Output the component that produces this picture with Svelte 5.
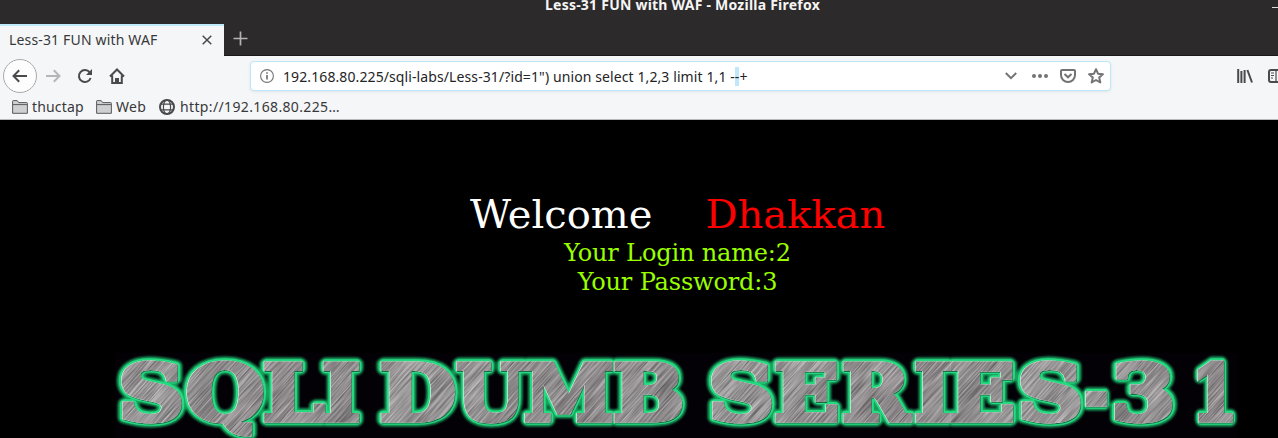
<script>
  // Each banner glyph is stretched to span [left, right] on the baseline.
  const glyphs = [
    ['S', 122, 182], ['Q', 187, 263], ['L', 264, 325], ['I', 323, 360],
    ['D', 381, 455], ['U', 456, 526], ['M', 525, 613], ['B', 614, 683],
    ['S', 712, 772], ['E', 775, 838], ['R', 843, 913], ['I', 915, 951], ['E', 950, 1014],
    ['S', 1021, 1081], ['-', 1085, 1108], ['3', 1115, 1173], ['1', 1197, 1234]
  ];
  const size = 76;
  const inset = 2.5;
  const ctx = document.createElement('canvas').getContext('2d');
  ctx.font = `bold ${size}px "DejaVu Serif"`;
  const fitted = glyphs.map(([char, left, right]) => {
    const m = ctx.measureText(char);
    const sx = (right - left - inset * 2) / (m.actualBoundingBoxLeft + m.actualBoundingBoxRight);
    return { char, t: `translate(${left + inset + m.actualBoundingBoxLeft * sx} 68) scale(${sx} 1)` };
  });
</script>

<div class="window">
  <header class="title">Less-31 FUN with WAF - Mozilla Firefox<i></i></header>
  <div class="tabs">
    <div class="tab"><span>Less-31 FUN with WAF</span>
      <svg width="12" height="12" viewBox="0 0 12 12"><path d="M1.7 1.7l8.6 8.6M10.3 1.7l-8.6 8.6" stroke="#4a4a4c" stroke-width="1.5" /></svg>
    </div>
    <svg class="plus" width="15" height="15" viewBox="0 0 15 15"><path d="M7.5 .5v14M.5 7.5h14" stroke="#b4b2b3" stroke-width="1.7" /></svg>
  </div>
  <nav>
    <div class="back"><svg width="16" height="16" viewBox="0 0 16 16"><path d="M15 8H2M7.2 2.2L1.5 8l5.7 5.8" /></svg></div>
    <svg class="forward" width="16" height="16" viewBox="0 0 16 16"><path d="M1 8h13M8.8 2.2L14.5 8l-5.7 5.8" /></svg>
    <svg class="reload" width="16" height="16" viewBox="0 0 16 16"><path d="M12.7 4.4A6 6 0 1 0 13.6 10" /><path d="M15 1v6H9z" fill="#4a4a4c" stroke="none" /></svg>
    <svg class="home" width="16" height="16" viewBox="0 0 16 16"><path d="M1 8.5L8 1.5l7 7M3.2 7.5V15h9.6V7.5" /><path d="M6 15v-5h4v5" fill="#4a4a4c" stroke="none" /></svg>
    <div class="url">
      <svg width="14" height="14" viewBox="0 0 14 14" fill="none" stroke="#737375"><circle cx="7" cy="7" r="6.4" stroke-width="1.1" /><path d="M7 6v4.5M7 3.2v1.6" stroke-width="1.7" /></svg>
      <span class="address">192.168.80.225/sqli-labs/Less-31/?id=1") union select 1,2,3 limit 1,1 -<mark>-</mark>+</span>
      <div class="actions">
        <svg width="12" height="8" viewBox="0 0 12 8"><path d="M.8 1L6 6.2 11.2 1" /></svg>
        <svg class="dots" width="16" height="4" viewBox="0 0 16 4"><circle cx="2" cy="2" r="2" /><circle cx="8" cy="2" r="2" /><circle cx="14" cy="2" r="2" /></svg>
        <svg class="pocket" width="16" height="14" viewBox="0 0 16 14"><path d="M2 1h12q1 0 1 1v4a7 7 0 0 1-14 0V2q0-1 1-1z" /><path d="M4.5 5L8 8.3 11.5 5" /></svg>
        <svg class="star" width="16" height="16" viewBox="0 0 16 16"><path d="M8 1.2l2 4.5 4.9.5-3.7 3.3 1.1 5L8 12l-4.3 2.5 1.1-5-3.7-3.3L6 5.7z" stroke-linejoin="round" /></svg>
      </div>
    </div>
    <svg class="library" width="16" height="14" viewBox="0 0 16 14"><path d="M1.2 0v14M4.4 2v12M7.6 1v13M10.4 1L15 13.5" stroke-width="2" /></svg>
    <svg class="side" width="16" height="14" viewBox="0 0 16 14"><rect x="1" y="1" width="14" height="12" rx="2" /><path d="M8 1v12M3 4h3M3 6.5h3M3 9h2" stroke-width="1.2" /></svg>
  </nav>
  <div class="bookmarks">
    {#each ['thuctap', 'Web'] as name}
      <svg class="folder" width="16" height="14" viewBox="0 0 16 14"><path d="M.6 13.3V1.2q0-.6.6-.6h4l1.5 2h8q.7 0 .7.7v10z" fill="#ced0d2" stroke="#5a5a5c" /><path d="M1 4.6h14" stroke="#5a5a5c" /></svg>
      <span class={name}>{name}</span>
    {/each}
    <svg class="globe" width="16" height="16" viewBox="0 0 16 16"><circle cx="8" cy="8" r="7" stroke-width="2" /><ellipse cx="8" cy="8" rx="3.6" ry="7" /><path d="M1.5 5.2h13M1.5 10.8h13" /></svg>
    <span class="link">http://192.168.80.225…</span>
  </div>
  <main>
    <h1><span>Welcome</span><b>Dhakkan</b></h1>
    <p class="login">Your Login name:2</p>
    <p class="pass">Your Password:3</p>
    <svg class="banner" width="1278" height="86" viewBox="0 0 1278 86">
      <defs>
        <linearGradient id="steel" gradientUnits="userSpaceOnUse" x1="0" y1="0" x2="110" y2="70" spreadMethod="reflect">
          <stop offset="0" stop-color="#857f81" /><stop offset=".25" stop-color="#989495" /><stop offset=".5" stop-color="#858182" /><stop offset=".8" stop-color="#a5a2a3" /><stop offset="1" stop-color="#8f8b8c" />
        </linearGradient>
        <filter id="grain" x="0" y="0" width="1" height="1" color-interpolation-filters="sRGB">
          <feTurbulence type="fractalNoise" baseFrequency=".85 .025" numOctaves="2" seed="4" />
          <feColorMatrix values="1.7 0 0 0 -.27  1.7 0 0 0 -.28  1.7 0 0 0 -.27  0 0 0 0 .34" />
        </filter>
        <filter id="soft" filterUnits="userSpaceOnUse" x="0" y="-10" width="1278" height="106"><feGaussianBlur stdDeviation="1.1" /></filter>
        <g id="letters">{#each fitted as g}<text transform={g.t}>{g.char}</text>{/each}</g>
        <mask id="cut" maskUnits="userSpaceOnUse" x="0" y="0" width="1278" height="86"><use href="#letters" class="mask" /></mask>
      </defs>
      <rect x="115" y="1" width="1123" height="85" fill="#040106" />
      {#each ['glow', 'edge', 'shade', 'shine'] as layer}
        <use href="#letters" class={layer} />
      {/each}
      <g mask="url(#cut)">
        <rect width="1278" height="86" fill="url(#steel)" />
        <g transform="rotate(42)"><rect x="0" y="-900" width="1100" height="1000" filter="url(#grain)" /></g>
      </g>
    </svg>
  </main>
</div>

<style>
  :global(body) { margin: 0; background: #000; }
  .window { width: 1278px; height: 438px; overflow: hidden; background: #000; font: 15px "Noto Sans", sans-serif; color: #38383a; }
  svg { display: block; flex: none; }
  .title { height: 24px; background: #2d2a2b; color: #f5f5f5; font-weight: 700; font-size: 14px; line-height: 10px; padding-left: 545px; box-sizing: border-box; white-space: nowrap; display: flex; letter-spacing: .23px; }
  .title i { width: 6px; height: 1px; background: #ddd; margin: 7px 0 0 auto; }
  .tabs { height: 32px; background: #2d2a2b; display: flex; box-sizing: border-box; border-bottom: 1px solid #1b181c; }
  .tab { width: 224px; height: 32px; box-sizing: border-box; border-top: 2px solid #bfe9f8; background: #f5f6f7; display: flex; align-items: center; padding: 0 11px 2px 9px; justify-content: space-between; font-size: 14px; white-space: nowrap; letter-spacing: .16px; }
  .tab span { padding-bottom: 1px; }
  .plus { margin: 7px 0 0 9px; }
  nav { height: 40px; background: #f5f6f8; display: flex; align-items: center; padding-left: 3px; }
  nav svg { fill: none; stroke: #4a4a4c; stroke-width: 2; }
  .back { width: 34px; height: 34px; box-sizing: border-box; border: 1px solid #aaa; border-radius: 50%; background: #fdfdfd; display: grid; place-items: center; flex: none; }
  nav .forward { stroke: #b5b6b7; margin-left: 8px; }
  .reload { margin-left: 16px; }
  .home { margin-left: 16px; }
  .url { width: 861px; height: 30px; box-sizing: border-box; border: 1px solid #b9e8f8; border-radius: 4px; margin-left: 125px; background: #fff; box-shadow: 0 1px 3px #dfe5e8; display: flex; align-items: center; padding: 0 6px 0 9px; flex: none; }
  .url svg { stroke: #737375; }
  .url > svg { stroke-width: 1; }
  .address { margin-left: 9px; color: #242426; font-size: 14px; line-height: 16px; white-space: nowrap; letter-spacing: .1px; padding-top: 1px; }
  mark { background: #bfe9f8; color: inherit; }
  .actions { display: flex; align-items: center; margin-left: auto; }
  .actions .dots { fill: #737375; stroke: none; margin-left: 15px; }
  .pocket { margin-left: 12px; }
  .star { margin-left: 12px; }
  .library { margin-left: 126px; }
  .side { margin-left: 15px; }
  .bookmarks { height: 24px; box-sizing: border-box; background: #f5f6f8; border-bottom: 1px solid #b9b9bb; display: flex; align-items: center; padding: 0 0 1px 12px; white-space: nowrap; line-height: 20px; font-size: 14px; }
  .bookmarks svg { margin-bottom: 1px; }
  .folder { fill: none; margin-right: 4px; }
  .thuctap { width: 64px; letter-spacing: .15px; }
  .Web { width: 43px; letter-spacing: .3px; }
  .link { letter-spacing: .36px; }
  .globe { fill: none; stroke: #4a4a4c; stroke-width: 1.2; margin-right: 5px; }
  main { background: #000; font-family: "DejaVu Serif", serif; text-align: center; height: 318px; overflow: hidden; }
  h1 { margin: 70px 0 0; font-size: 40px; line-height: 48px; font-weight: 400; color: #fff; display: flex; padding-left: 470px; gap: 53px; }
  h1 b { color: #f00; font-weight: 400; }
  p { margin: 0; font-size: 24px; line-height: 29px; color: #9f0; width: 1355px; letter-spacing: -.15px; }
  .login { padding-top: 1px; }
  .banner { margin-top: 55px; font: bold 76px "DejaVu Serif", serif; stroke-linejoin: round; }
  .glow { fill: #17a561; stroke: #17a561; stroke-width: 13px; filter: url(#soft); }
  .edge { fill: #26da80; stroke: #26da80; stroke-width: 9.5px; }
  .shade { fill: #1c6b48; stroke: #1c6b48; stroke-width: 5px; stroke-linejoin: miter; transform: translate(.5px, .5px); }
  .shine { fill: #fff; stroke: #fff; stroke-width: 5px; stroke-linejoin: miter; transform: translate(-.5px, -.5px); }
  .mask { fill: #fff; stroke: #fff; stroke-width: 5px; stroke-linejoin: miter; }
</style>
